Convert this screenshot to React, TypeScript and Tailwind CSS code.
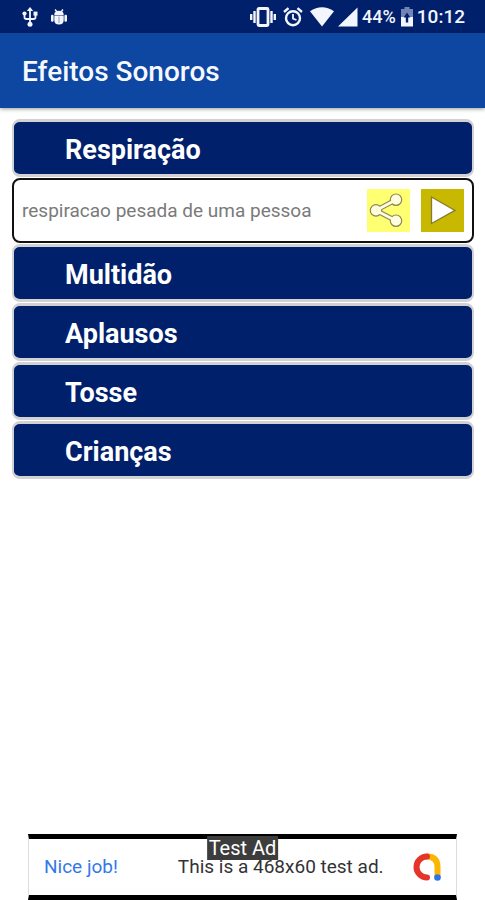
import { useState } from "react";

const categories = [
  { key: "respiracao", label: "Respiração", sounds: ["respiracao pesada de uma pessoa"] },
  { key: "multidao", label: "Multidão", sounds: [] },
  { key: "aplausos", label: "Aplausos", sounds: [] },
  { key: "tosse", label: "Tosse", sounds: [] },
  { key: "criancas", label: "Crianças", sounds: [] },
];

function StatusBar() {
  return (
    <div className="flex h-[33px] items-center justify-between bg-[#00206c] pr-5 pl-[22px] text-[#f4f6ff]">
      <div className="flex items-center gap-3">
        {/* usb */}
        <svg viewBox="0 0 16 20" className="h-5 w-4" fill="none" stroke="currentColor" strokeWidth="1.8">
          <path d="M8 3v13M2.500 7v3.200q0 1.800 2 1.800h7q2 0 2-1.800V7" />
          <path d="M8 0l3.200 4H4.800z" fill="currentColor" stroke="none" />
          <circle cx="8" cy="17.300" r="2.500" fill="currentColor" stroke="none" />
          <circle cx="2.500" cy="6.500" r="2.100" fill="currentColor" stroke="none" />
          <path d="M11.500 4.600h4v4h-4z" fill="currentColor" stroke="none" />
        </svg>
        {/* debug */}
        <svg viewBox="0 0 18 18" className="h-[18px] w-[18px]" fill="currentColor">
          <path d="M5 1.500l2.500 3M13 1.500l-2.500 3" stroke="currentColor" strokeWidth="1.400" />
          <path d="M4.300 7q0-4.200 4.700-4.200T13.700 7z" />
          <path d="M4.300 7.600h9.400V12q0 4.500-4.700 4.500T4.300 12z" />
          <rect x="1" y="6.800" width="2.600" height="7" rx="1.200" />
          <rect x="14.400" y="6.800" width="2.600" height="7" rx="1.200" />
          <path d="M9 8.500v6.500" stroke="#8d99c0" strokeWidth="1" />
        </svg>
      </div>
      <div className="flex items-center">
        {/* vibrate */}
        <svg viewBox="0 0 26 20" className="mr-[7px] h-5 w-[26px]" fill="none" stroke="currentColor" strokeWidth="2">
          <rect x="8" y="1.500" width="10" height="17" rx="1" strokeWidth="2.800" />
          <path d="M4.500 4v12M21.500 4v12M1.200 7v6M24.800 7v6" strokeWidth="2.400" />
        </svg>
        {/* alarm */}
        <svg viewBox="0 0 20 20" className="mr-[7px] h-5 w-5" fill="none" stroke="currentColor" strokeWidth="2.400">
          <circle cx="10" cy="11.200" r="7" />
          <path d="M1 5l4.500-3.800M19 5l-4.500-3.800" />
          <path d="M10 7v4.700l3.500 1.300" strokeWidth="1.800" />
        </svg>
        {/* wifi */}
        <svg viewBox="0 0 24 20" className="mr-1 h-5 w-6" fill="currentColor">
          <path d="M0 4.200Q12-3.800 24 4.200L12 19.500z" />
        </svg>
        {/* signal */}
        <svg viewBox="0 0 20 20" className="mr-1 h-5 w-5" fill="currentColor">
          <path d="M19.500.5v19H0z" />
        </svg>
        <span className="text-[18px] leading-5 font-medium">44%</span>
        {/* battery */}
        <svg viewBox="0 0 14 20" className="mr-[3px] ml-1 h-5 w-[14px]" fill="currentColor">
          <path d="M4.500 0h5v2H13v8H1V2h3.500z" fill="#7184b4" />
          <path d="M1 10h12v9.500H1z" />
          <path d="M7 5.500l3.300 5H8.200v5H5.800v-5H3.700z" fill="#00206c" />
        </svg>
        <span className="text-[19px] leading-5 font-medium">10:12</span>
      </div>
    </div>
  );
}

function SoundRow({ name }: { name: string }) {
  return (
    <div className="flex h-[65px] items-center gap-[11px] rounded-lg border-2 border-[#111] bg-white pr-2 pl-2">
      <span className="min-w-0 flex-1 truncate text-[19px] leading-6 text-[#7a7a7a]">{name}</span>
      <button type="button" aria-label="Compartilhar" className="h-[43px] w-[43px] bg-[#ffff72]">
        <svg viewBox="0 0 43 43" className="h-[43px] w-[43px]">
          <path d="M29 10.700L9 21.400L29 31.700" fill="none" stroke="#8b8650" strokeWidth="5" />
          <g fill="#fffde0" stroke="#8b8650" strokeWidth="1.200">
            <circle cx="29" cy="10.700" r="5.700" />
            <circle cx="9" cy="21.400" r="5.700" />
            <circle cx="29" cy="31.700" r="5.700" />
          </g>
          <path d="M29 10.700L9 21.400L29 31.700" fill="none" stroke="#fffde0" strokeWidth="2.800" />
        </svg>
      </button>
      <button type="button" aria-label="Tocar" className="h-[43px] w-[43px] bg-[#c8b900]">
        <svg viewBox="0 0 43 43" className="h-[43px] w-[43px]">
          <path d="M10.500 8v26.500L34 21.400z" fill="#fff" stroke="#857c30" strokeWidth="1.300" />
        </svg>
      </button>
    </div>
  );
}

function AdBanner() {
  return (
    <div className="relative mx-7 flex h-[66px] items-center border-x border-y-[5px] border-x-[#ddd] border-y-black bg-white pr-[15px] pl-[15px]">
      <a href="#ad" className="text-[19px] leading-6 text-[#3478e8]">
        Nice job!
      </a>
      <span className="ml-[60px] flex-1 text-[19px] leading-6 whitespace-nowrap text-[#333]">
        This is a 468x60 test ad.
      </span>
      <svg viewBox="0 0 28 28" className="h-7 w-7" fill="none" strokeWidth="6" strokeLinecap="round">
        <path d="M14 3.500Q24.500 3.500 24.500 14V23" stroke="#fbb604" />
        <path d="M14 3.500A10.500 10.500 0 0 0 14 24.500" stroke="#e5352b" />
        <circle cx="24.500" cy="24.500" r="3.300" fill="#2f74e6" />
      </svg>
      <span className="absolute -top-[3px] left-1/2 -translate-x-1/2 bg-[#3d3d3d] px-[2px] text-[20px] leading-6 whitespace-nowrap text-white">
        Test Ad
      </span>
    </div>
  );
}

export default function App() {
  const [open, setOpen] = useState("respiracao");

  return (
    <div className="flex min-h-screen flex-col bg-white font-[Roboto,sans-serif]">
      <StatusBar />
      <header className="flex h-[75px] items-center bg-[#0d47a1] px-[22px] pt-[2px] shadow-[0_1px_4px_rgba(0,0,0,0.4)]">
        <h1 className="text-[28px] leading-8 font-medium text-[#f6f8ff]">Efeitos Sonoros</h1>
      </header>

      <main className="mt-[11px] mr-[11px] ml-3 flex flex-1 flex-col">
        <div className="flex flex-col gap-px">
          {categories.map((c) => (
            <div key={c.key} className="flex flex-col gap-px">
              <button
                type="button"
                aria-expanded={open === c.key}
                onClick={() => setOpen(open === c.key ? "" : c.key)}
                className="h-[58px] rounded-lg border-x-2 border-y-3 border-[#d2d2d4] bg-[#00206c] pt-1 pl-[51px] text-left text-[27px] leading-8 font-bold text-white"
              >
                {c.label}
              </button>
              {open === c.key && c.sounds.map((s) => <SoundRow key={s} name={s} />)}
            </div>
          ))}
        </div>
      </main>

      <AdBanner />
    </div>
  );
}
